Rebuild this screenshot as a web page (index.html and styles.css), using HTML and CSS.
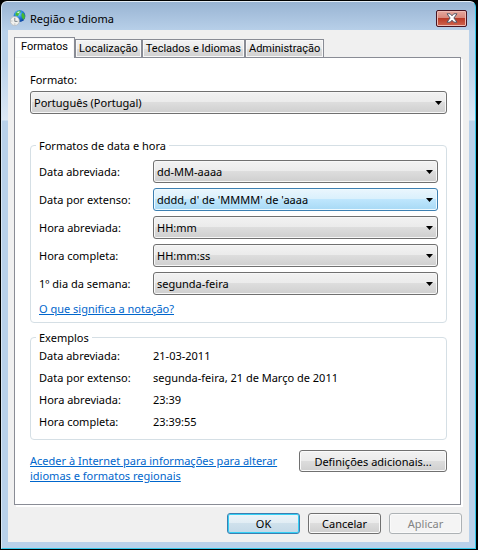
FILE: index.html
```html
<!DOCTYPE html>
<html lang="pt">
<head>
<meta charset="utf-8">
<title>Região e Idioma</title>
<link rel="stylesheet" href="styles.css">
</head>
<body>
<main class="window">
  <header class="titlebar">
    <svg class="app-icon" viewBox="0 0 16 16" aria-hidden="true">
      <defs>
        <radialGradient id="sea" cx=".4" cy=".3" r=".75"><stop offset="0" stop-color="#8fe0ff"/><stop offset=".45" stop-color="#2887df"/><stop offset="1" stop-color="#063a9a"/></radialGradient>
      </defs>
      <circle cx="9.500" cy="6" r="5.900" fill="url(#sea)"/>
      <path d="M5.500 3.500Q7.500 .8 10 .6L11 2 9.200 3.600 8 6 5.500 5.500ZM12.500 2.500 14.500 4.500 15 7.500 13.500 10 12 7.500 11.300 5Z" fill="#45ba31"/>
      <path d="M7 2.500 9 1.300 10 2 8 3.500Z" fill="#d8f8ee"/>
      <circle cx="4.800" cy="11" r="4.500" fill="#f1f1ee" stroke="#b5b9bb" stroke-width=".8"/>
      <path d="M4.800 7.800V11.400H7.500" fill="none" stroke="#7c848a"/>
      <path d="M4.800 13.500V14.500M1.400 11H2.300" stroke="#8b9196" stroke-width=".8"/>
    </svg>
    <h1 class="title">Região e Idioma</h1>
    <button class="close" type="button" aria-label="Fechar">
      <svg viewBox="0 0 12 10" aria-hidden="true"><path d="M1 .8H4.200L6 2.800 7.800.8H11L7.900 5 11 9.200H7.800L6 7.200 4.200 9.200H1L4.100 5Z" fill="#fff" stroke="#535666" stroke-width="1"/></svg>
    </button>
  </header>
  <form class="client">
    <nav class="tabs" role="tablist">
      <button class="tab active" type="button" role="tab" aria-selected="true">Formatos</button>
      <button class="tab" type="button" role="tab">Localização</button>
      <button class="tab" type="button" role="tab">Teclados e Idiomas</button>
      <button class="tab" type="button" role="tab">Administração</button>
    </nav>
    <section class="panel">
      <label class="format-label" for="format">Formato:</label>
      <div class="combo"><select id="format"><option>Português (Portugal)</option></select></div>
      <fieldset class="group formats">
        <legend>Formatos de data e hora</legend>
        <div class="fields">
          <label for="short-date">Data abreviada:</label>
          <div class="combo"><select id="short-date"><option>dd-MM-aaaa</option></select></div>
          <label for="long-date">Data por extenso:</label>
          <div class="combo hot"><select id="long-date"><option>dddd, d' de 'MMMM' de 'aaaa</option></select></div>
          <label for="short-time">Hora abreviada:</label>
          <div class="combo"><select id="short-time"><option>HH:mm</option></select></div>
          <label for="long-time">Hora completa:</label>
          <div class="combo"><select id="long-time"><option>HH:mm:ss</option></select></div>
          <label for="first-day">1º dia da semana:</label>
          <div class="combo"><select id="first-day"><option>segunda-feira</option></select></div>
        </div>
        <a class="notation" href="#">O que significa a notação?</a>
      </fieldset>
      <fieldset class="group examples">
        <legend>Exemplos</legend>
        <dl class="samples">
          <dt>Data abreviada:</dt><dd>21-03-2011</dd>
          <dt>Data por extenso:</dt><dd>segunda-feira, 21 de Março de 2011</dd>
          <dt>Hora abreviada:</dt><dd>23:39</dd>
          <dt>Hora completa:</dt><dd>23:39:55</dd>
        </dl>
      </fieldset>
      <div class="more">
        <a href="#">Aceder à Internet para informações para alterar<br>idiomas e formatos regionais</a>
        <button class="button wide" type="button">Definições adicionais...</button>
      </div>
    </section>
    <footer class="actions">
      <button class="button default" type="submit">OK</button>
      <button class="button" type="button">Cancelar</button>
      <button class="button" type="button" disabled>Aplicar</button>
    </footer>
  </form>
</main>
</body>
</html>
```
FILE: styles.css
```css
* {
  box-sizing: border-box;
}

body {
  margin: 0;
  background: #000;
  color: #000;
  font: 11px/15px "Noto Sans", "Open Sans", sans-serif;
}

button,
select {
  font: inherit;
  color: inherit;
}

a {
  color: #0066cc;
}

.window {
  display: flex;
  flex-direction: column;
  min-height: calc(100vh - 2px);
  margin: 1px 2px 1px 1px;
  padding: 0 6px 6px;
  border: 1px solid #35c8ea;
  border-top-color: #e4edf6;
  border-left-color: #d9e7f4;
  border-radius: 6px 6px 0 0;
  background: linear-gradient(#99b4d3, #b9d1ea 30px, #b9d1ea 60px, #dce8f5 118px, #b9d1ea 119px);
}

.titlebar {
  display: flex;
  align-items: center;
  height: 28px;
  padding: 4px 2px 0;
}

.app-icon {
  width: 16px;
  height: 16px;
}

.title {
  flex: 1;
  margin: 0 4px;
  font-size: 11px;
  font-weight: 400;
}

.close {
  display: grid;
  place-items: center;
  width: 31px;
  height: 17px;
  padding: 0;
  border: 1px solid #481522;
  border-radius: 2px;
  background: linear-gradient(#e6a89e, #d8897c 45%, #b93a27 50%, #d0654f);
  box-shadow: inset 0 0 0 1px #eebbb3;
}

.close svg {
  width: 12px;
  height: 10px;
}

.client {
  flex: 1;
  display: flex;
  flex-direction: column;
  padding: 7px 6px 8px;
  background: #f0f0f0;
}

.tabs {
  display: flex;
  align-items: flex-end;
  height: 20px;
}

.tab {
  height: 18px;
  padding: 0 3px;
  border: 1px solid #898c95;
  border-bottom: 0;
  background: linear-gradient(#f3f3f3, #ebebeb 50%, #dddddd 51%, #d0d0d0);
  box-shadow: inset 0 0 0 1px #f8f8f8;
  font: 11px/17px Roboto, "Liberation Sans", sans-serif;
}

.tab.active {
  position: relative;
  height: 21px;
  margin-bottom: -1px;
  padding: 0 6px 3px;
  background: #fff;
}

.panel {
  flex: 1;
  display: flex;
  flex-direction: column;
  margin-right: 2px;
  padding: 14px 13px 15px 15px;
  border: 1px solid #898c95;
  background: #fff;
  box-shadow: 2px 2px #fff;
}

.format-label {
  margin-bottom: 4px;
}

.combo {
  position: relative;
  height: 23px;
}

.combo::after {
  content: "";
  position: absolute;
  top: 10px;
  right: 5px;
  width: 7px;
  height: 4px;
  background: #000;
  clip-path: polygon(0 0, 100% 0, 50% 100%);
  pointer-events: none;
}

.combo select {
  appearance: none;
  display: block;
  width: 100%;
  height: 100%;
  padding: 0 16px 0 3px;
  border: 1px solid #707070;
  border-radius: 3px;
  background: linear-gradient(#f2f2f2, #ebebeb 48%, #dddddd 50%, #cfcfcf);
  box-shadow: inset 0 0 0 1px #f7f7f7;
}

.combo.hot select {
  border-color: #3c7fb1;
  background: linear-gradient(#eaf6fd, #d9f0fc 48%, #bee6fd 50%, #a7d9f5);
  box-shadow: inset 0 0 0 1px #effaff;
}

.group {
  margin: 0;
  min-width: 0;
  border: 1px solid #d5dfe5;
  border-radius: 4px;
}

.group legend {
  padding: 0 3px;
}

.formats {
  margin-top: 24px;
  padding: 7px 8px 6px 5px;
}

.fields {
  display: grid;
  grid-template-columns: 114px 1fr;
  align-items: center;
  gap: 5px 0;
  padding-left: 3px;
}

.notation {
  display: inline-block;
  margin: 6px 0 0 3px;
}

.examples {
  margin-top: 7px;
  padding: 0 5px 6px;
}

.samples {
  display: grid;
  grid-template-columns: 114px 1fr;
  margin: 0;
  padding-left: 3px;
  line-height: 22px;
}

.samples dd {
  margin: 0;
}

.more {
  display: flex;
  justify-content: space-between;
  align-items: flex-start;
  margin-top: 10px;
}

.more a {
  margin-top: 3px;
  white-space: nowrap;
}

.button {
  width: 73px;
  height: 21px;
  padding: 0;
  border: 1px solid #707070;
  border-radius: 3px;
  background: linear-gradient(#f2f2f2, #ebebeb 48%, #dddddd 50%, #cfcfcf);
  box-shadow: inset 0 0 0 1px #fafafa;
}

.button.wide {
  flex: none;
  width: 148px;
  height: 22px;
}

.button.default {
  border-color: #3c7fb1;
  background: linear-gradient(#edf5f9, #e1edf4 48%, #cfe1ec 50%, #c4d9e7);
  box-shadow: inset 0 0 0 1px #35d0f5;
}

.button:disabled {
  border-color: #adb2b5;
  background: #f4f4f4;
  color: #838383;
}

.actions {
  display: flex;
  justify-content: flex-end;
  gap: 8px;
  margin: 8px 1px 0 0;
}
```
